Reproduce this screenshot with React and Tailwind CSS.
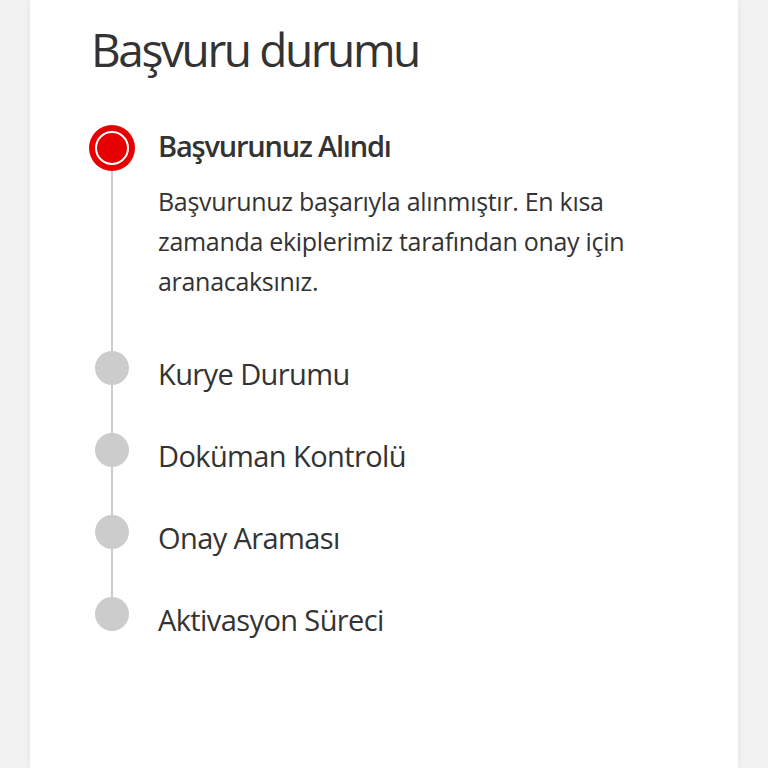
const steps = ['Kurye Durumu', 'Doküman Kontrolü', 'Onay Araması', 'Aktivasyon Süreci']

export default function App() {
  return (
    <div className="h-[768px] w-[768px] overflow-hidden bg-[#f2f2f2] font-['Open_Sans',sans-serif] text-[#333]">
      <div className="mx-[30px] h-full bg-white pl-[59px] pr-10 shadow-[0_0_6px_rgba(0,0,0,0.08)]">
        <h1 className="ml-[2px] pt-[19px] text-[46px] leading-[60px] tracking-[-2.4px] text-[#333]">Başvuru durumu</h1>

        <div className="mt-[46px] flex flex-col">
          {/* active step */}
          <div className="flex">
            <div className="flex w-[46px] shrink-0 flex-col items-center">
              <div className="flex h-[46px] w-[46px] items-center justify-center rounded-full bg-[#e60000]">
                <div className="h-[34px] w-[34px] rounded-full border-[2.5px] border-white bg-[#e60000]" />
              </div>
              <div className="w-[2px] flex-1 bg-[#cccccc]" />
            </div>
            <div className="ml-[23px] pb-[50px]">
              <div className="flex h-[46px] items-center pb-[4px] text-[29px] font-semibold tracking-[-1.2px]">Başvurunuz Alındı</div>
              <p className="mt-[10px] max-w-[480px] text-[25px] leading-[40px] tracking-[-0.3px]">
                Başvurunuz başarıyla alınmıştır. En kısa zamanda ekiplerimiz tarafından onay için aranacaksınız.
              </p>
            </div>
          </div>

          {steps.map((s, i) => (
            <div key={s} className="flex h-[82px]">
              <div className="flex w-[46px] shrink-0 flex-col items-center">
                <div className="h-[34px] w-[34px] shrink-0 rounded-full bg-[#cccccc]" />
                {i < steps.length - 1 && <div className="w-[2px] flex-1 bg-[#cccccc]" />}
              </div>
              <div className="ml-[23px] flex h-[34px] items-center pt-[12px] text-[29px] font-normal tracking-[-0.6px]">{s}</div>
            </div>
          ))}
        </div>
      </div>
    </div>
  )
}
